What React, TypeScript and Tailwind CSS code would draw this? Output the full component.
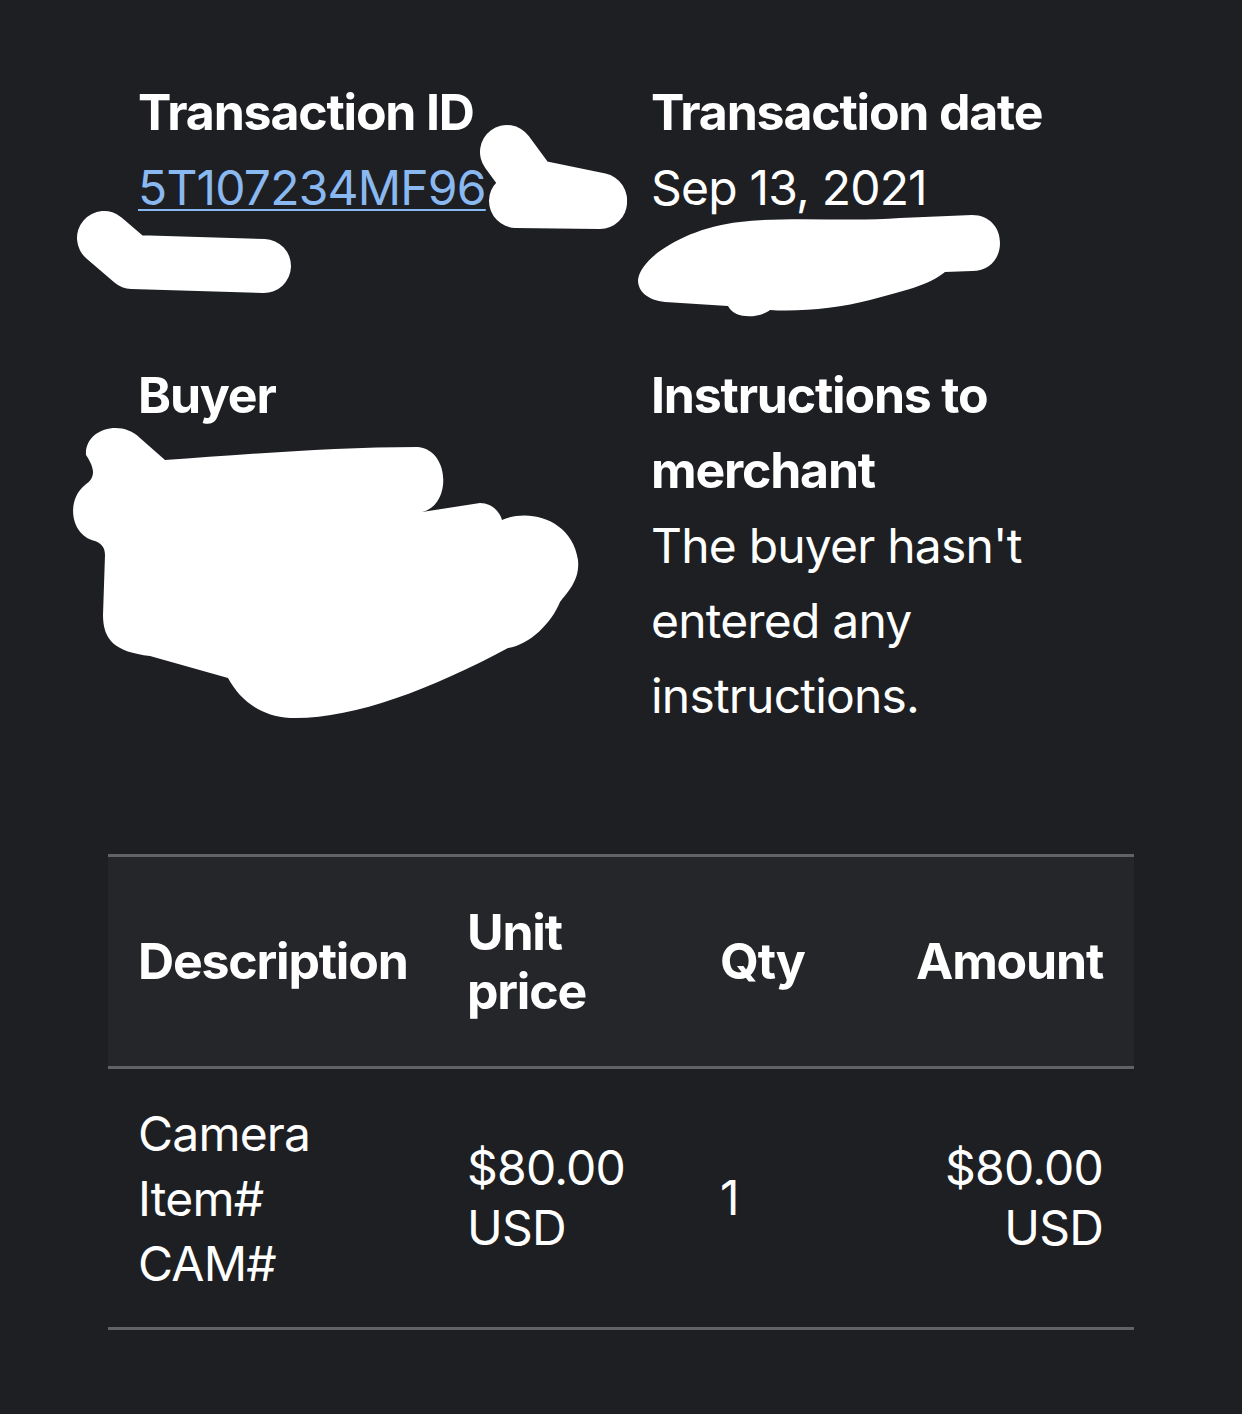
import React from "react";

const font = { fontFamily: "Inter, 'Liberation Sans', sans-serif" };

function Field({ label, children }: { label: string; children?: React.ReactNode }) {
  return (
    <div className="px-[30px]">
      <h3 className="text-[50px] leading-[75px] font-bold text-white tracking-[-1.2px]">{label}</h3>
      <div className="text-[48px] leading-[75px] text-white tracking-[-0.8px]">{children}</div>
    </div>
  );
}

// white marker scribbles drawn over the private details
function Scribbles() {
  return (
    <svg
      className="absolute left-0 top-0 pointer-events-none"
      width={1242}
      height={1414}
      viewBox="0 0 1242 1414"
      fill="none"
    >
      <g stroke="#fff" strokeWidth={54} strokeLinecap="round" strokeLinejoin="round">
        <path d="M507 152 L532 186 L600 200" />
        <path d="M516 201 L600 202" />
        <path d="M104 238 L132 262 L264 266" />
      </g>
      <path
        fill="#fff"
        d="M638 280 C640 258 685 228 740 222 C790 216 850 222 900 218 L972 215 C990 215 1000 228 1000 243 C1000 258 990 271 972 271 L945 272 C930 285 900 292 870 300 C840 308 800 312 770 310 C760 318 735 320 728 306 L665 302 C648 300 638 292 638 280 Z"
      />
      <path
        fill="#fff"
        d="M86 455 C84 430 120 418 140 438 L165 460 C240 455 330 447 418 447 C450 450 452 505 422 512 L480 503 C492 503 500 512 502 520 C530 508 572 520 578 560 C580 580 568 592 560 602 C552 622 530 645 508 648 C430 690 350 720 290 718 C260 716 240 700 228 678 L150 656 C115 652 103 640 103 615 L105 555 C105 546 100 543 95 541 C70 535 66 500 85 485 C95 478 96 470 86 455 Z"
      />
    </svg>
  );
}

export default function App() {
  return (
    <div className="relative min-h-screen w-[1242px] h-[1414px] bg-[#1e1f23] overflow-hidden" style={font}>
      <div className="px-[108px] pt-[75px]">
        {/* transaction details */}
        <div className="grid grid-cols-2">
          <div className="pb-[133px]">
            <Field label="Transaction ID">
              <a href="#" className="text-[#8ab8f0] underline underline-offset-[4px] decoration-2">
                5T107234MF96
              </a>
            </Field>
          </div>
          <div className="pb-[133px]">
            <Field label="Transaction date">Sep 13, 2021</Field>
          </div>
          <Field label="Buyer" />
          <Field label="Instructions to merchant">The buyer hasn't entered any instructions.</Field>
        </div>

        {/* items table */}
        <div className="mt-[121px] border-y-[3px] border-[#626265]">
          <div className="grid grid-cols-[329px_253px_200px_1fr] items-center bg-[#252629] h-[212px] text-[50px] font-bold text-white tracking-[-1.2px] border-b-[3px] border-[#626265]">
            <div className="pl-[30px]">Description</div>
            <div className="pl-[30px] leading-[59px]">Unit<br />price</div>
            <div className="pl-[30px]">Qty</div>
            <div className="pr-[31px] text-right">Amount</div>
          </div>
          <div className="grid grid-cols-[329px_253px_200px_1fr] items-center h-[258px] text-[48px] text-white tracking-[-0.8px]">
            <div className="pl-[30px] leading-[65px]">
              <p>Camera</p>
              <p>Item#</p>
              <p>CAM#</p>
            </div>
            <div className="pl-[30px] leading-[60px]">$80.00<br />USD</div>
            <div className="pl-[30px]">1</div>
            <div className="pr-[31px] text-right leading-[60px]">$80.00<br />USD</div>
          </div>
        </div>
      </div>
      <Scribbles />
    </div>
  );
}
